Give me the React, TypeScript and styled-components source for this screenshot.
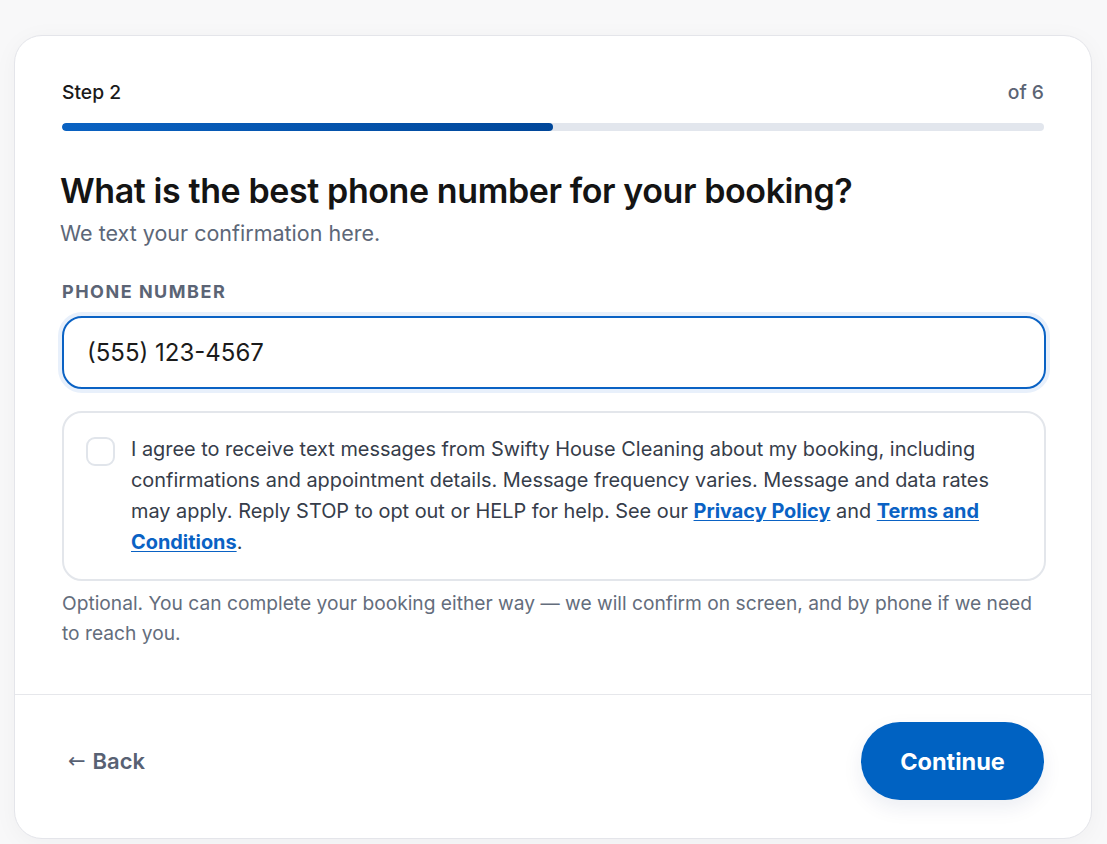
import React from "react";
import styled, { createGlobalStyle } from "styled-components";

const Global = createGlobalStyle`
  html, body { margin: 0; padding: 0; background: #f8f8f9; }
  body { font-family: Inter, "Noto Sans", sans-serif; }
  * { box-sizing: border-box; }
`;

const Page = styled.div`
  padding: 35px 15px 6px 14px;
`;

const Card = styled.div`
  background: #fff;
  border: 1px solid #e4e5ea;
  border-radius: 28px;
  box-shadow: 0 4px 24px rgba(15, 23, 42, 0.04);
  overflow: hidden;
`;

const Body = styled.div`
  padding: 42px 47px 46px 47px;
`;

const StepRow = styled.div`
  display: flex;
  justify-content: space-between;
  align-items: center;
  font-family: Inter, sans-serif;
  font-size: 19.3px;
  line-height: 28px;
`;

const StepLabel = styled.span`
  color: #1a1a1a;
  font-weight: 500;
`;

const StepOf = styled.span`
  color: #5b6474;
  font-weight: 500;
`;

const Track = styled.div`
  margin-top: 17px;
  height: 8px;
  border-radius: 999px;
  background: #e2e6ed;
  overflow: hidden;
`;

const Fill = styled.div`
  height: 100%;
  border-radius: 999px;
  background: linear-gradient(90deg, #0a62c2, #00479a);
`;

const Heading = styled.h1`
  margin: 40px 0 0 -2px;
  font-family: Inter, sans-serif;
  font-size: 34px;
  line-height: 40px;
  font-weight: 600;
  letter-spacing: -0.4px;
  color: #141414;
`;

const Sub = styled.p`
  margin: 8px 0 0 -2px;
  font-size: 21.5px;
  line-height: 28px;
  color: #5d6778;
`;

const Label = styled.div`
  margin-top: 33px;
  font-size: 18px;
  line-height: 24px;
  font-weight: 700;
  letter-spacing: 1.5px;
  color: #5b6475;
`;

const InputWrap = styled.div`
  margin-top: 12px;
  margin-right: -2px;
  border-radius: 20px;
  box-shadow: 0 0 0 4px #e8f0fb;
`;

const Input = styled.input`
  display: block;
  width: 100%;
  height: 73px;
  border: 2px solid #0a62c4;
  border-radius: 20px;
  padding: 0 23px;
  font-family: Inter, sans-serif;
  font-size: 24px;
  color: #1b1b1b;
  outline: none;
  background: #fff;
`;

const Consent = styled.label`
  margin-top: 22px;
  margin-right: -2px;
  display: flex;
  gap: 16px;
  padding: 21px 36px 21px 22px;
  border: 2px solid #e3e6eb;
  border-radius: 20px;
`;

const Box = styled.span`
  flex: none;
  width: 29px;
  height: 29px;
  margin-top: 3px;
  border: 2px solid #e1e5eb;
  border-radius: 9px;
  background: #fff;
`;

const ConsentText = styled.p`
  margin: 0;
  font-size: 19.9px;
  line-height: 31px;
  color: #363d4a;
`;

const Link = styled.a`
  color: #0a62c4;
  font-weight: 700;
  text-decoration: underline;
  text-underline-offset: 2px;
`;

const Helper = styled.p`
  margin: 7px 0 0;
  font-size: 19.2px;
  line-height: 30px;
  color: #646d7c;
`;

const Footer = styled.div`
  border-top: 1px solid #e6e7eb;
  display: flex;
  justify-content: space-between;
  align-items: center;
  padding: 27px 47px 38px 53px;
`;

const Back = styled.button`
  display: flex;
  align-items: center;
  gap: 7px;
  border: none;
  background: none;
  padding: 0;
  font-family: Inter, sans-serif;
  font-size: 22px;
  font-weight: 600;
  color: #586173;
  cursor: pointer;
`;

const Arrow = styled.span`
  font-family: "DejaVu Sans", sans-serif;
  font-weight: 400;
  font-size: 21px;
`;

const Continue = styled.button`
  border: none;
  background: #0062c2;
  color: #fff;
  height: 78px;
  width: 183px;
  border-radius: 999px;
  font-family: Inter, sans-serif;
  font-size: 23.5px;
  font-weight: 700;
  box-shadow: 0 8px 20px rgba(0, 40, 100, 0.08);
  cursor: pointer;
`;

export default function App() {
  const progress = 50;
  return (
    <Page>
      <Global />
      <Card>
        <Body>
          <StepRow>
            <StepLabel>Step 2</StepLabel>
            <StepOf>of 6</StepOf>
          </StepRow>
          <Track>
            <Fill style={{ width: `${progress}%` }} />
          </Track>
          <Heading>What is the best phone number for your booking?</Heading>
          <Sub>We text your confirmation here.</Sub>
          <Label>PHONE NUMBER</Label>
          <InputWrap>
            <Input defaultValue="(555) 123-4567" />
          </InputWrap>
          <Consent>
            <Box />
            <ConsentText>
              I agree to receive text messages from Swifty House Cleaning about my booking, including
              confirmations and appointment details. Message frequency varies. Message and data rates
              may apply. Reply STOP to opt out or HELP for help. See our <Link href="#">Privacy Policy</Link> and{" "}
              <Link href="#">Terms and Conditions</Link>.
            </ConsentText>
          </Consent>
          <Helper>
            Optional. You can complete your booking either way — we will confirm on screen, and by phone if we need
            to reach you.
          </Helper>
        </Body>
        <Footer>
          <Back>
            <Arrow>←</Arrow>
            <span>Back</span>
          </Back>
          <Continue>Continue</Continue>
        </Footer>
      </Card>
    </Page>
  );
}
